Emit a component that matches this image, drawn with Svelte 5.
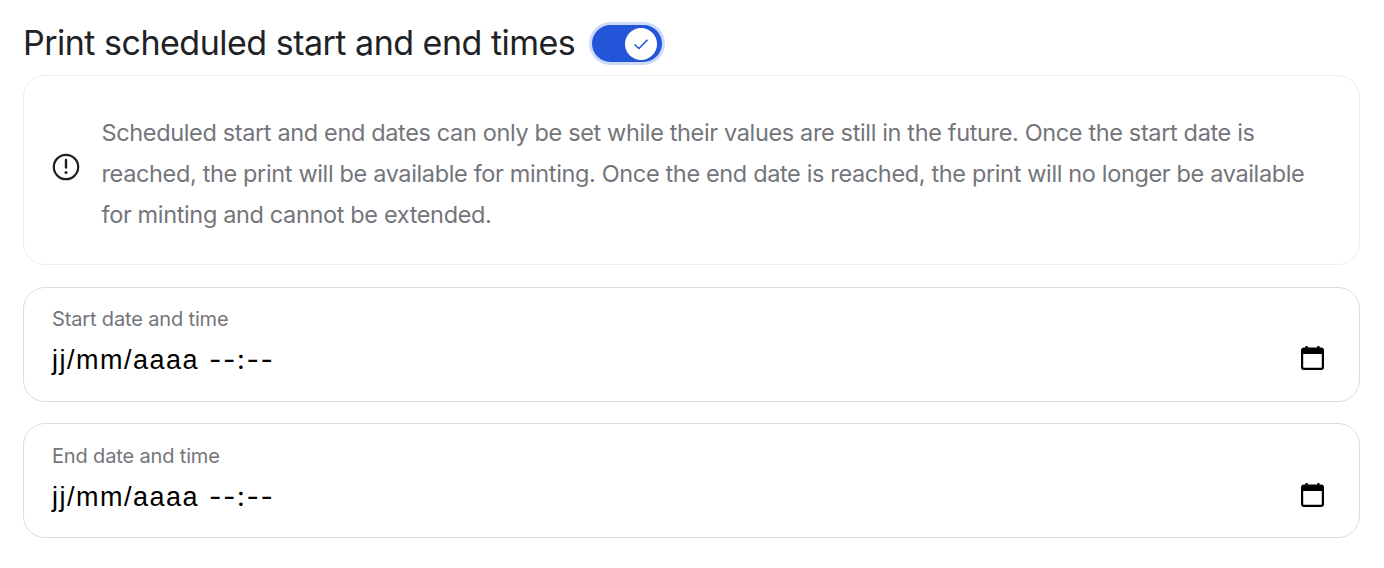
<script>
  const fields = ['Start date and time', 'End date and time'];
</script>

<main class="page">
  <header class="head">
    <h2>Print scheduled start and end times</h2>
    <div class="toggle" role="switch" aria-checked="true">
      <span class="knob">
        <svg width="18" height="18" viewBox="0 0 18 18" fill="none"><path d="M2.5 9.5 7 13.5 15.5 4.8" stroke="#2355d8" stroke-width="1.6"/></svg>
      </span>
    </div>
  </header>
  <section class="notice">
    <svg class="alert" width="28" height="28" viewBox="0 0 28 28" fill="none">
      <circle cx="14" cy="14" r="12.2" stroke="#1f2024" stroke-width="2.2"/>
      <path d="M14 7v7.5" stroke="#1f2024" stroke-width="2.4" stroke-linecap="round"/>
      <circle cx="14" cy="19.6" r="1.5" fill="#1f2024"/>
    </svg>
    <p>Scheduled start and end dates can only be set while their values are still in the future. Once the start date is reached, the print will be available for minting. Once the end date is reached, the print will no longer be available for minting and cannot be extended.</p>
  </section>
  {#each fields as label}
    <div class="field">
      <div class="label">{label}</div>
      <div class="row">
        <div class="value"><span class="date">jj/mm/aaaa</span><span class="time">--:--</span></div>
        <svg class="cal" width="23" height="24" viewBox="0 0 23 24" fill="none">
          <rect x="1.1" y="2.6" width="20.8" height="20.3" rx="1.8" stroke="#000" stroke-width="2.2"/>
          <rect x="1" y="2.5" width="21" height="5.5" rx="1.5" fill="#000"/>
          <rect x="4.5" y="0" width="2.2" height="3.5" fill="#000"/>
          <rect x="16.3" y="0" width="2.2" height="3.5" fill="#000"/>
        </svg>
      </div>
    </div>
  {/each}
</main>

<style>
  :global(body) { margin: 0; background: #fff; }
  .page {
    width: 1337px;
    padding: 18px 0 0 23px;
    display: flex;
    flex-direction: column;
    font-family: Inter, sans-serif;
  }
  .head { display: flex; align-items: center; gap: 17px; height: 49px; margin-bottom: 8px; }
  h2 { margin: 0; font-size: 34px; font-weight: 400; color: #212226; letter-spacing: -0.5px; white-space: nowrap; }
  .toggle {
    width: 70px; height: 37px; border-radius: 19px; background: #2355d8; margin-top: 2px;
    box-shadow: 0 0 0 3px #cddafa; display: flex; align-items: center; justify-content: flex-end;
    padding: 0 5px; box-sizing: border-box;
  }
  .knob { width: 32px; height: 32px; border-radius: 50%; background: #fff; display: flex; align-items: center; justify-content: center; }
  .notice {
    box-sizing: border-box; height: 190px; border: 1px solid #ededef; border-radius: 22px;
    display: flex; align-items: center; gap: 21.5px; padding: 6px 28px 0; margin-bottom: 22px;
  }
  .alert { flex: none; margin-top: -13px; }
  p { margin: 0; font-size: 23.5px; line-height: 41px; color: #74757b; letter-spacing: -0.36px; }
  .field {
    box-sizing: border-box; height: 115px; border: 1px solid #dcdcdf; border-radius: 22px;
    display: flex; flex-direction: column; padding: 17px 35px 0 28px; margin-bottom: 21px;
  }
  .field + .field { padding-top: 18px; }
  .label { font-size: 20px; line-height: 28px; color: #74757b; letter-spacing: -0.15px; }
  .row { display: flex; align-items: center; justify-content: space-between; margin-top: 7px; }
  .value { font-family: "Liberation Sans", sans-serif; font-size: 27px; line-height: 40px; color: #000; }
  .date { letter-spacing: 1.5px; }
  .time { font-family: Inter, sans-serif; letter-spacing: 1.6px; margin-left: 10px; }
  .cal { flex: none; margin-top: -4px; }
</style>
